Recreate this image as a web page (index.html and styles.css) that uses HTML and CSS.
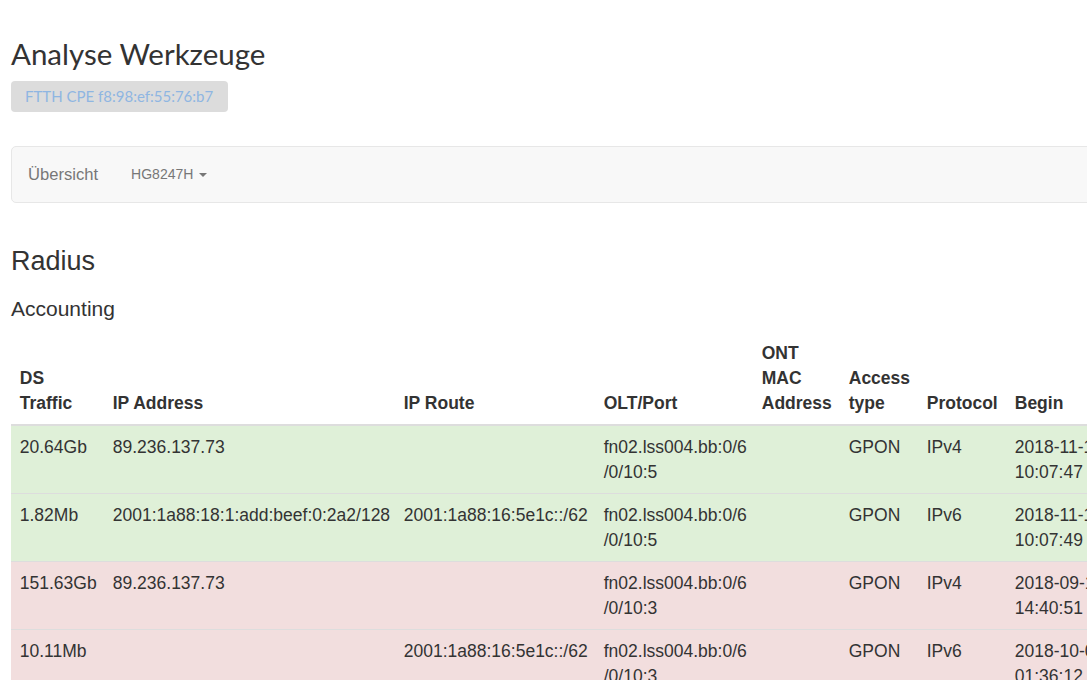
FILE: index.html
```html
<!DOCTYPE html>
<html lang="de">
<head>
<meta charset="utf-8">
<title>Analyse Werkzeuge</title>
<link rel="stylesheet" href="styles.css">
</head>
<body>
<div class="page">
  <h1 class="title">Analyse Werkzeuge</h1>
  <span class="badge">FTTH CPE f8:98:ef:55:76:b7</span>

  <nav class="navbar">
    <a class="nav-item nav-main">Übersicht</a>
    <a class="nav-item nav-drop">HG8247H <span class="caret"></span></a>
  </nav>

  <h2 class="section">Radius</h2>
  <h4 class="subsection">Accounting</h4>

  <table class="acct">
    <colgroup>
      <col class="c1"><col class="c2"><col class="c3"><col class="c4"><col class="c5"><col class="c6"><col class="c7"><col class="c8"><col class="c9"><col class="c10">
    </colgroup>
    <thead>
      <tr>
        <th>DS Traffic</th>
        <th>IP Address</th>
        <th>IP Route</th>
        <th>OLT/Port</th>
        <th>ONT MAC Address</th>
        <th>Access type</th>
        <th>Protocol</th>
        <th>Begin</th>
        <th>End</th>
        <th>US Traffic</th>
      </tr>
    </thead>
    <tbody>
      <tr class="ok">
        <td>20.64Gb</td>
        <td>89.236.137.73</td>
        <td></td>
        <td class="brk">fn02.lss004.bb:0/6/0/10:5</td>
        <td></td>
        <td>GPON</td>
        <td>IPv4</td>
        <td>2018-11-14 10:07:47</td>
        <td></td>
        <td>1.21Gb</td>
      </tr>
      <tr class="ok">
        <td>1.82Mb</td>
        <td>2001:1a88:18:1:add:beef:0:2a2/128</td>
        <td>2001:1a88:16:5e1c::/62</td>
        <td class="brk">fn02.lss004.bb:0/6/0/10:5</td>
        <td></td>
        <td>GPON</td>
        <td>IPv6</td>
        <td>2018-11-14 10:07:49</td>
        <td></td>
        <td>0.31Mb</td>
      </tr>
      <tr class="bad">
        <td>151.63Gb</td>
        <td>89.236.137.73</td>
        <td></td>
        <td class="brk">fn02.lss004.bb:0/6/0/10:3</td>
        <td></td>
        <td>GPON</td>
        <td>IPv4</td>
        <td>2018-09-12 14:40:51</td>
        <td>2018-11-14 10:02:11</td>
        <td>9.40Gb</td>
      </tr>
      <tr class="bad">
        <td>10.11Mb</td>
        <td></td>
        <td>2001:1a88:16:5e1c::/62</td>
        <td class="brk">fn02.lss004.bb:0/6/0/10:3</td>
        <td></td>
        <td>GPON</td>
        <td>IPv6</td>
        <td>2018-10-02 01:36:12</td>
        <td>2018-11-14 10:02:11</td>
        <td>1.02Mb</td>
      </tr>
    </tbody>
  </table>
</div>
</body>
</html>
```

FILE: styles.css
```css
html, body {
  margin: 0;
  padding: 0;
  overflow: hidden;
  background: #fff;
}

body {
  font-family: "Liberation Sans", Arial, sans-serif;
  color: #333;
  font-size: 17.5px;
  line-height: 25px;
}

.page {
  width: 1500px;
  padding: 36px 0 0 11px;
}

.title {
  font-family: Lato, "Liberation Sans", sans-serif;
  font-weight: 400;
  font-size: 29.5px;
  line-height: 36px;
  margin: 0;
  color: #333;
}

.badge {
  display: inline-block;
  margin-top: 9px;
  height: 31px;
  line-height: 31px;
  padding: 0 15px 0 14px;
  background: #dcdcdc;
  border-radius: 4px;
  font-family: Lato, "Liberation Sans", sans-serif;
  font-size: 15px;
  color: #8fb6e2;
  vertical-align: top;
}

.navbar {
  display: flex;
  align-items: center;
  gap: 33px;
  margin-top: 34px;
  height: 55px;
  border: 1px solid #e7e7e7;
  border-radius: 5px 0 0 5px;
  background: #f8f8f8;
  padding-left: 16px;
}

.nav-item {
  color: #777;
}

.nav-main {
  font-size: 16.6px;
}

.nav-drop {
  font-size: 14px;
  display: inline-flex;
  align-items: center;
  gap: 6px;
}

.caret {
  display: inline-block;
  width: 0;
  height: 0;
  border-top: 4px solid #777;
  border-left: 4px solid transparent;
  border-right: 4px solid transparent;
}

.section {
  font-weight: 400;
  font-size: 27px;
  line-height: 32px;
  margin: 42px 0 0;
}

.subsection {
  font-weight: 400;
  font-size: 21px;
  line-height: 26px;
  margin: 19px 0 0;
}

.acct {
  margin-top: 10px;
  border-collapse: collapse;
  table-layout: fixed;
  width: 1393px;
}

.c1 { width: 93px; }
.c2 { width: 291px; }
.c3 { width: 200px; }
.c4 { width: 158px; }
.c5 { width: 87px; }
.c6 { width: 78px; }
.c7 { width: 88px; }
.c8 { width: 110px; }
.c9 { width: 110px; }
.c10 { width: 178px; }

.acct th,
.acct td {
  padding: 8.5px 8.75px;
  text-align: left;
  vertical-align: top;
}

.acct th {
  vertical-align: bottom;
  font-weight: 700;
  border-bottom: 2px solid #ddd;
}

.acct td {
  border-top: 1px solid #ddd;
}

.acct tbody tr:first-child td {
  border-top: 0;
}

.acct .brk {
  line-break: anywhere;
  word-break: break-all;
  padding-right: 4px;
}

.ok td {
  background: #dff0d8;
}

.bad td {
  background: #f2dede;
}
```
